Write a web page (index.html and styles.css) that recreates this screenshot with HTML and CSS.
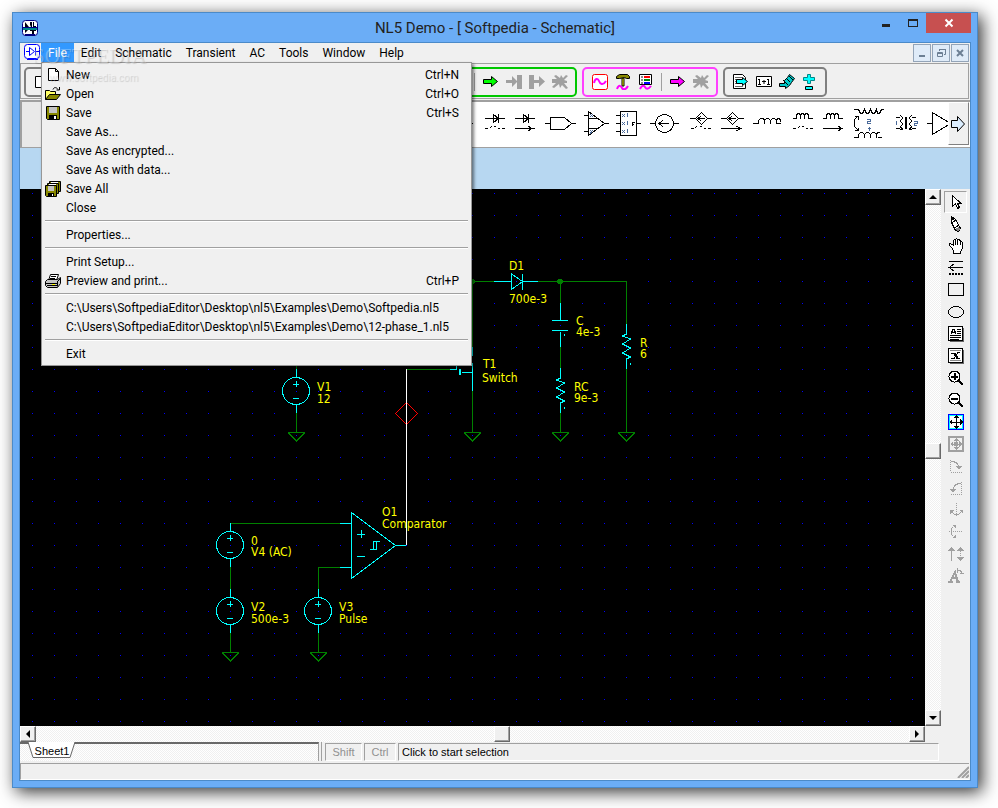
FILE: index.html
```html
<!DOCTYPE html>
<html lang="en">
<head>
  <meta charset="UTF-8" />
  <meta name="viewport" content="width=device-width, initial-scale=1" />
  <title>NL5 Demo - [ Softpedia - Schematic]</title>
  <link rel="stylesheet" href="styles.css">
</head>
<body>
  <div class="window">
    <header class="titlebar">
      <svg class="app-icon" width="16" height="16" viewBox="0 0 16 16">
        <rect x=".5" y=".5" width="15" height="15" rx="3" fill="#fff" stroke="#000080"/>
        <path d="M3 2l4 5H3zM8 2h2v5H9L8 5zM11 2h1v4h2v1h-3z" fill="#001"/>
        <path d="M1 7h14v1H1z" fill="#008"/>
        <path d="M1 8h14v2H1z" fill="#088"/>
        <path d="M3 10h3l-3 3zM8 10h6v1h-2v3h-2v-3H8z" fill="#001"/>
        <path d="M3 15h10" stroke="#000080" stroke-width="2"/>
      </svg>
      <h1>NL5 Demo - [ Softpedia - Schematic]</h1>
      <div class="window-buttons">
        <button aria-label="Minimize"><svg width="12" height="10" viewBox="0 0 12 10"><path d="M2 6h8v3H2z" fill="#222"/></svg></button>
        <button aria-label="Maximize"><svg width="12" height="10" viewBox="0 0 12 10"><path d="M1 1h10v8H1zM2 3v5h8V3z" fill="#222" fill-rule="evenodd"/></svg></button>
        <button class="close" aria-label="Close"><svg width="10" height="10" viewBox="0 0 10 10"><path d="M1.500 1.500l7 7M8.500 1.500l-7 7" stroke="#fff" stroke-width="2"/></svg></button>
      </div>
    </header>

    <div class="client">
      <nav class="menubar">
        <svg class="doc-icon" width="17" height="18" viewBox="0 0 17 18" fill="none" stroke="#00f">
          <rect x=".5" y="1.500" width="15" height="14" rx="3" fill="#fff"/>
          <path d="M2 8.500h3M12 8.500h3M5.500 4.500v8l5-4zM11.500 4.500v8M3 16.500h11"/>
        </svg>
        <div class="menu">
          <button class="active">File</button>
          <div class="dropdown">
            <button><svg viewBox="0 0 16 16"><path d="M3.500 1.500h7l3 3v9h-10zM10.500 1.500v3h3" fill="#fff" stroke="#000"/></svg><span>New</span><kbd>Ctrl+N</kbd></button>
            <button><svg viewBox="0 0 16 16"><path d="M.5 13.500v-9h4l1 1h5v3" fill="#ff6" stroke="#000"/><path d="M.5 13.500l4-5h11l-4 5z" fill="#880" stroke="#000"/><path d="M8 3.500c1-3 4-2 5 0M14.500 1v3h-3" fill="none" stroke="#000"/></svg><span>Open</span><kbd>Ctrl+O</kbd></button>
            <button><svg viewBox="0 0 16 16"><path d="M1.500 1.500h13v13h-12l-1-1z" fill="#880" stroke="#000"/><path d="M4 2h8v6H4z" fill="#c4c4c4"/><path d="M4 10h8v5H4z"/><path d="M9 11h2v3H9z" fill="#fff"/></svg><span>Save</span><kbd>Ctrl+S</kbd></button>
            <button><i></i><span>Save As...</span></button>
            <button><i></i><span>Save As encrypted...</span></button>
            <button><i></i><span>Save As with data...</span></button>
            <button><svg viewBox="0 0 16 16"><g fill="#880" stroke="#000"><path d="M4.500 .5h11v10h-11z"/><path d="M2.500 2.500h11v10h-11z"/><path d="M.5 4.500h11v11H1.500l-1-1z"/></g><path d="M3 5h6v5H3z" fill="#c4c4c4"/><path d="M6 1h7v1H6zM4 3h7v1H4z" fill="#fff"/><path d="M3 12h6v3H3z"/><path d="M7 13h1v2H7z" fill="#fff"/></svg><span>Save All</span></button>
            <button><i></i><span>Close</span></button>
            <hr>
            <button><i></i><span>Properties...</span></button>
            <hr>
            <button><i></i><span>Print Setup...</span></button>
            <button><svg viewBox="0 0 16 16"><path d="M3.500 7.500l2-6h8l-2 6" fill="#fff" stroke="#000"/><path d="M6 3.500h5M5 5.500h5" stroke="#000"/><path d="M.5 8.500l2-2h10l3-2v6l-3 4h-10l-2-2z" fill="#c4c4c4" stroke="#000"/><path d="M1 10.500h11M2 12.500h10M12.500 8.500v5M12 9l3-3" stroke="#000"/><path d="M7 11h3v1H7z" fill="#ff0"/></svg><span>Preview and print...</span><kbd>Ctrl+P</kbd></button>
            <hr>
            <button><i></i><span>C:\Users\SoftpediaEditor\Desktop\nl5\Examples\Demo\Softpedia.nl5</span></button>
            <button><i></i><span>C:\Users\SoftpediaEditor\Desktop\nl5\Examples\Demo\12-phase_1.nl5</span></button>
            <hr>
            <button><i></i><span>Exit</span></button>
          </div>
        </div>
        <button>Edit</button>
        <button>Schematic</button>
        <button>Transient</button>
        <button>AC</button>
        <button>Tools</button>
        <button>Window</button>
        <button>Help</button>
        <div class="mdi-buttons">
          <button aria-label="Minimize sheet"><svg width="12" height="12" viewBox="0 0 12 12"><path d="M3 8h6v2H3z" fill="#6c7f94"/></svg></button>
          <button aria-label="Restore sheet"><svg width="12" height="12" viewBox="0 0 12 12" fill="none" stroke="#6c7f94"><path d="M4.500 4V2.500h6v5H9M4 2.500h7M2.500 5.500h5v4h-5zM2 6.500h6"/></svg></button>
          <button aria-label="Close sheet"><svg width="12" height="12" viewBox="0 0 12 12"><path d="M3 3l6 6M9 3l-6 6" stroke="#6c7f94" stroke-width="2"/></svg></button>
        </div>
      </nav>

      <div class="toolbar">
        <div class="group group-file">
          <button aria-label="New"><svg viewBox="0 0 16 16"><path d="M1.500 2.500h9l3 3v8h-12z" fill="#fff" stroke="#000"/></svg></button>
        </div>
        <div class="group group-transient">
          <span class="divider"></span>
          <button aria-label="Run"><svg viewBox="0 0 16 16"><path d="M.5 5.500h8v-3l6 5-6 5v-3h-8z" fill="#0f0" stroke="#000"/></svg></button>
          <button aria-label="Step" disabled><svg viewBox="0 0 16 16"><path d="M0 6h6V2l5 5V1h5v14h-5V8l-5 5V9H0z" fill="#a0a0a0"/></svg></button>
          <button aria-label="Continue" disabled><svg viewBox="0 0 16 16"><path d="M0 1h5v5h5V2l6 5.500-6 5.500V9H5v6H0z" fill="#a0a0a0"/></svg></button>
          <button aria-label="Stop" disabled><svg viewBox="0 0 16 16"><path d="M0 5h5L2 2l2-1 4 3 1-3 2 3 3-3 2 1-4 4 3 1v2h-3l4 5-2 1-4-4-2 3-1-4-5 4-2-1 4-4H0z" fill="#a0a0a0"/></svg></button>
        </div>
        <div class="group group-ac">
          <button aria-label="Transient data"><svg viewBox="0 0 16 16"><rect x=".5" y=".5" width="15" height="15" rx="2" fill="#fff" stroke="#f00"/><path d="M2 9c1-5 4-5 5-2s4 5 7 0" fill="none" stroke="#f0f" stroke-width="2"/></svg></button>
          <button aria-label="AC settings"><svg viewBox="0 0 16 16"><path d="M7 4h2v8H7z" fill="#ff0" stroke="#000"/><path d="M1.500 2.500l3-2h8l2 2v2h-3l-2-1-5 1h-3z" fill="#880" stroke="#000"/><path d="M2 15c2-5 4-3 5-1s4 2 6-2" fill="none" stroke="#f0f" stroke-width="2"/></svg></button>
          <button aria-label="AC data"><svg viewBox="0 0 16 16"><path d="M1.500 .5h12v10h-12z" fill="#fff" stroke="#000"/><path d="M3 3h2M3 6h2M3 9h2" stroke="#888" stroke-width="2"/><path d="M6 3h6" stroke="#f00" stroke-width="2"/><path d="M6 6h6" stroke="#080" stroke-width="2"/><path d="M6 9h6" stroke="#00f" stroke-width="2"/><path d="M2 15c2-4 4-4 5-2s3 3 6-1" fill="none" stroke="#f0f" stroke-width="2"/></svg></button>
          <span class="divider"></span>
          <button aria-label="Run AC"><svg viewBox="0 0 16 16"><path d="M.5 5.500h8v-3l6 5-6 5v-3h-8z" fill="#f0f" stroke="#000"/></svg></button>
          <button aria-label="Stop AC" disabled><svg viewBox="0 0 16 16"><path d="M0 5h5L2 2l2-1 4 3 1-3 2 3 3-3 2 1-4 4 3 1v2h-3l4 5-2 1-4-4-2 3-1-4-5 4-2-1 4-4H0z" fill="#a0a0a0"/></svg></button>
        </div>
        <div class="group group-tools">
          <button aria-label="Script"><svg viewBox="0 0 16 16"><path d="M.5 .5h9l3 3v11H.5z" fill="#fff" stroke="#000"/><path d="M2 3.500h7M2 5.500h2M2 7.500h2M2 9.500h2M2 12.500h8" stroke="#666"/><path d="M3.500 5.500h6v-2l5 4-5 4v-2h-6z" fill="#0ff" stroke="#000"/></svg></button>
          <button aria-label="Calculator"><svg viewBox="0 0 16 16"><path d="M.5 2.500h15v10H.5z" fill="#fff" stroke="#000"/><path d="M3.500 5v5M2 10.500h3M2 5.500h2M12.500 5v5M11 10.500h3M11 5.500h2M6 7.500h4M8 6v4" stroke="#000"/></svg></button>
          <button aria-label="Sweep"><svg viewBox="0 0 16 16"><path d="M.5 9.500h5v-3l3-3 2-3 5 4-3 4-2 3-4 3v-2h-6z" fill="#0cc" stroke="#000"/><path d="M4 6l5 5M7 4l4 4M10 2l4 4" stroke="#000"/></svg></button>
          <button aria-label="Optimize"><svg viewBox="0 0 16 16"><path d="M5.500 .5h3v3h4v3h-4v3h-3v-3h-4v-3h4z" fill="#0ff" stroke="#088"/><path d="M3.500 12.500h7v3h-7z" fill="#0ff" stroke="#000"/></svg></button>
        </div>
      </div>

      <div class="palette">
        <button class="palette-prev" aria-label="Previous components"></button>
        <div class="parts">
          <button class="wide" aria-label="Resistor"><svg width="40" height="40" viewBox="0 0 40 40"><path d="M4 21.500h6l2-4 4 8 4-8 4 8 2-4h7"/></svg></button>
          <button aria-label="Diode, voltage controlled"><svg width="30" height="40" viewBox="0 0 30 40"><path d="M5 16.500h20M13.500 12.500v8l5-4zM18.500 12v9M5 26.500h3M10 26l2-2M14 24h2M18 26l2 0M22 26.500h3"/></svg></button>
          <button aria-label="Diode, current controlled"><svg width="30" height="40" viewBox="0 0 30 40"><path d="M5 16.500h20M13.500 12.500v8l5-4zM18.500 12v9M5 26.500h20M18 24l4 2.500-4 2.500"/></svg></button>
          <button class="wide" aria-label="Logic gate"><svg width="40" height="40" viewBox="0 0 40 40"><path d="M5 21.500h5M10.500 15.500h14l7 6-7 6h-14zM31 21.500h5"/></svg></button>
          <button aria-label="Multiplier"><svg width="30" height="40" viewBox="0 0 30 40"><path d="M4 13.500h4M4 29.500h4M8.500 9.500v24l16-12zM8 16.500h9M8 26.500h9M24 21.500h5"/><path class="mark" d="M10 12l3 3M13 12l-3 3M10 28l2 2M13 28l-3 4"/></svg></button>
          <button class="mid" aria-label="Function"><svg width="36" height="40" viewBox="0 0 36 40"><path d="M10.500 9.500h16v24h-16zM6 13.500h4M6 21.500h4M6 29.500h4M27 21.500h4M22.500 24v-4h2M22 22h2"/><path class="mark" d="M12 12l3 3M15 12l-3 3M17 11v4M12 20l3 3M15 20l-3 3M17 19v4M12 28l3 3M15 28l-3 3M17 27v4"/></svg></button>
          <button class="mid" aria-label="Current source"><svg width="36" height="40" viewBox="0 0 36 40"><circle cx="18.500" cy="21.500" r="9"/><path d="M4 21.500h5M28 21.500h5M13 21.500h10M17 18l-4 3.500 4 3.500"/></svg></button>
          <button class="mid" aria-label="Current source, voltage controlled"><svg width="36" height="40" viewBox="0 0 36 40"><path d="M8 16.500h5M25 16.500h5M19.500 10.500l-6 6 6 6 6-6zM16 16.500h7M19 14l-3 2.500 3 2.500M9 26.500h3M13 26l2-2M18 24h2M22 26l2 0M26 26.500h3"/></svg></button>
          <button aria-label="Current source, current controlled"><svg width="30" height="40" viewBox="0 0 30 40"><path d="M3 16.500h5M20 16.500h6M14.500 10.500l-6 6 6 6 6-6zM11 16.500h7M14 14l-3 2.500 3 2.500M3 26.500h20M18 24l5 2.500-5 2.500"/></svg></button>
          <button class="wide" aria-label="Inductor"><svg width="40" height="40" viewBox="0 0 40 40"><path d="M5 21.500h5.500v-2q0-3 3-3t3 3v2v-2q0-3 3-3t3 3v2v-2q0-3 3-3t3 3v2v-2q0-3 2-3t2 3M29 21.500h4"/></svg></button>
          <button aria-label="Inductor, voltage controlled"><svg width="30" height="40" viewBox="0 0 30 40"><path d="M5 16.500h3.500v-2q0-3 2-3t2 3v2v-2q0-3 2-3t2 3v2v-2q0-3 2-3t2 3v2h4M5 26.500h3M10 26l2-2M14 24h2M18 26l2 0M22 26.500h3"/></svg></button>
          <button aria-label="Inductor, current controlled"><svg width="30" height="40" viewBox="0 0 30 40"><path d="M5 16.500h3.500v-2q0-3 2-3t2 3v2v-2q0-3 2-3t2 3v2v-2q0-3 2-3t2 3v2h4M5 26.500h20M20 24l4 2.500-4 2.500"/></svg></button>
          <button class="wide" aria-label="Coupled inductors"><svg width="40" height="40" viewBox="0 0 40 40"><path d="M6 7.500h4.500l2 4h2l2-4l2 4h2l2-4l2 4h2l2-4l1 4h2l2-4h2M6 35.500h4.500v-3l2-2h2l2 2v3v-3l2-2h2l2 2v3v-3l2-2h2l2 2v3v-3l1-2h2M30 35.500h4M10 14l-4 4v6l4 4M7 14.500h3v3M7 28.500h3v-3"/><path class="mark" d="M19 17h3v2h-3v2h4M20 26h3M21 25v4"/></svg></button>
          <button class="mid" aria-label="Transformer"><svg width="36" height="40" viewBox="0 0 36 40"><path d="M8 15.500h4M12 13l3 3-3 3 3 3-3 3 3 2-3 1M8 26.500h4M28 15.500h-4M24 13l-3 3 3 3-3 3 3 3-3 2 3 1M28 26.500h-4M17.500 15v12M18.500 15v12"/><path class="mark" d="M8.500 19v4M26 19h3v2h-3v2h3"/></svg></button>
          <button class="cut" aria-label="Amplifier"><svg width="24" height="40" viewBox="0 0 24 40"><path d="M3 21.500h5M8.500 10.500v22l18-11z"/></svg></button>
        </div>
        <button class="palette-next" aria-label="More components"><svg width="15" height="18" viewBox="0 0 15 18"><path d="M.5 5.500h6v-4l7 7.500-7 7.500v-4h-6z" fill="#dceeff" stroke="#000"/></svg></button>
      </div>

      <div class="caption-strip"></div>

      <main class="workspace">
        <div class="sheet">
          <svg class="canvas" width="100%" height="100%">
            <defs>
              <pattern id="grid" width="22" height="22" patternUnits="userSpaceOnUse">
                <rect x="12" y="4" width="1" height="1" fill="#00f"/>
              </pattern>
              <g id="source" class="part">
                <circle cx="0" cy="0" r="13.500"/>
                <path d="M.5-22v8M.5 14v8M-3-6.500h6M.5-10v6M-3 7.500h6"/>
              </g>
              <path id="ground" class="wire" d="M-8 .5h17M-8 .5l8.500 8.500 8.500-8.500"/>
              <path id="zigzag" class="part" d="M.5-11v10L-3.500 1l8 3-8 5 8 4-8 5 8 4-4 2v10"/>
            </defs>
            <rect width="100%" height="100%" fill="url(#grid)"/>
            <g transform="translate(-20 -189)">
              <path class="wire" d="M296.500 340v29M296.500 413v19M230.500 523.500h110M230.500 567v22M230.500 633v19M340 567.500h-21.500v22M318.500 633v19"/>
              <path class="wire" d="M406 369.500h44M472.500 281v66M472.500 391v41M472 281.500h22M538 281.500h88.500V325M560.500 281v22M560.500 347v22M560.500 413v19M626.500 369v63"/>
              <circle class="node" cx="560" cy="281.500" r="3"/>
              <circle class="node" cx="472" cy="281.500" r="3"/>
              <use href="#ground" x="296" y="432"/>
              <use href="#ground" x="472" y="432"/>
              <use href="#ground" x="560" y="432"/>
              <use href="#ground" x="626" y="432"/>
              <use href="#ground" x="230" y="652"/>
              <use href="#ground" x="318" y="652"/>
              <use href="#source" x="296" y="391"/>
              <use href="#source" x="230" y="545"/>
              <use href="#source" x="230" y="611"/>
              <use href="#source" x="318" y="611"/>
              <use href="#zigzag" x="626" y="335"/>
              <use href="#zigzag" x="560" y="379"/>
              <!-- comparator -->
              <path class="part" d="M340 523.500h11M340 567.500h11M351.500 512.500v66l44-33zM395 545.500h11M357 534.500h8M361.500 530v8M357 556.500h8M370 549.500h6.500v-8M373.500 549v-7.500h6"/>
              <!-- switch -->
              <path class="part" d="M450 369.500h6.500V364M459.500 369v6M460.500 369v6M462 372.500h10M472.500 347v9M472.500 363v28"/>
              <!-- diode and capacitor -->
              <path class="part" d="M494 281.500h17M511.500 274v15.500l11-8zM522.500 274v16M522 281.500h16M560.500 303v17M552 320.500h16M552 330.500h16M560.500 332v15M564.500 334v2M564.500 407v2M630.500 363v2"/>
              <path class="probe" d="M406.500 402.500l11 11-11 11-11-11z"/>
              <g class="labels">
                <text x="317" y="391">V1</text><text x="317" y="403">12</text>
                <text x="382" y="516">O1</text><text x="382" y="528">Comparator</text>
                <text x="251" y="545">0</text><text x="251" y="556">V4 (AC)</text>
                <text x="251" y="611">V2</text><text x="251" y="623">500e-3</text>
                <text x="339" y="611">V3</text><text x="339" y="623">Pulse</text>
                <text x="509" y="270">D1</text><text x="509" y="303">700e-3</text>
                <text x="576" y="325">C</text><text x="576" y="336">4e-3</text>
                <text x="640" y="347">R</text><text x="640" y="358">6</text>
                <text x="574" y="391">RC</text><text x="574" y="402">9e-3</text>
                <text x="483" y="368">T1</text><text x="482" y="382">Switch</text>
              </g>
              <path class="selected" d="M406.500 369v176"/>
            </g>
          </svg>
          <div class="scroll scroll-v">
            <button aria-label="Scroll up"><svg width="8" height="8" viewBox="0 0 8 8"><path d="M0 6h8L4 2z"/></svg></button>
            <span class="track-before"></span>
            <span class="thumb"></span>
            <span class="track-after"></span>
            <button aria-label="Scroll down"><svg width="8" height="8" viewBox="0 0 8 8"><path d="M0 2h8L4 6z"/></svg></button>
          </div>
          <div class="scroll scroll-h">
            <button aria-label="Scroll left"><svg width="8" height="8" viewBox="0 0 8 8"><path d="M6 0v8L2 4z"/></svg></button>
            <span class="track-before"></span>
            <span class="thumb"></span>
            <span class="track-after"></span>
            <button aria-label="Scroll right"><svg width="8" height="8" viewBox="0 0 8 8"><path d="M2 0v8l4-4z"/></svg></button>
          </div>
          <div class="sheet-bar">
            <div class="tabs">
              <button class="tab"><svg width="48" height="17" viewBox="0 0 48 17"><path d="M0 0l5 15.500h37L47 0" fill="#fff" stroke="#666"/></svg><span>Sheet1</span></button>
            </div>
            <span class="splitter"></span>
            <span class="cell key">Shift</span>
            <span class="cell key key-ctrl">Ctrl</span>
            <span class="cell hint">Click to start selection</span>
          </div>
        </div>

        <div class="tools">
          <button class="pressed" aria-label="Select"><svg viewBox="0 0 16 16"><path d="M4.500 1.500v11l3-3 2 5 2-1-2-4h3.500z" fill="#fff" stroke="#000"/></svg></button>
          <button aria-label="Draw"><svg viewBox="0 0 16 16"><path d="M3.500 .5l4 3 5 9-2 3-3-1-4-8z" fill="#fff" stroke="#000"/><path d="M4 7l4-3M7 12l4-3" stroke="#000"/><path d="M8 12l3-1 1 2-2 2-2-1z" fill="#888"/><path d="M3 1h3v3H4z"/></svg></button>
          <button aria-label="Pan"><svg viewBox="0 0 16 16"><path d="M4.500 10.500l-3-3q-1-2 1-2l3 2v-5q1-2 2 0v-1q1-2 2 0v1q1-2 2.500 0v2q1-1.500 2.500 0v6l-2 3v2h-7v-2z" fill="#fff" stroke="#000"/><path d="M7.500 2v5M9.500 2v5M12 3v4" stroke="#000"/></svg></button>
          <button aria-label="Line"><svg viewBox="0 0 16 16"><path d="M1 1.500h14M1 7.500h14M6 4L1 7.500 6 11" stroke="#000" fill="none"/><path d="M1 14h15" stroke="#000" stroke-width="2" stroke-dasharray="2 1"/></svg></button>
          <button aria-label="Rectangle"><svg viewBox="0 0 16 16"><path d="M.5 1.500h15v12H.5z" fill="none" stroke="#000"/></svg></button>
          <button aria-label="Ellipse"><svg viewBox="0 0 16 16"><ellipse cx="8" cy="8" rx="7.500" ry="5.500" fill="none" stroke="#000"/></svg></button>
          <button aria-label="Text"><svg viewBox="0 0 16 16"><path d="M2 15.500h13.500V2" stroke="#666" fill="none"/><path d="M.5 .5h14v14H.5z" fill="#fff" stroke="#000"/><path d="M3 7.500l2-4h1l2 4M4 6.500h3M9 3.500h4M9 5.500h4M9 7.500h4M2 9.500h11M2 11.500h11M2 13.500h9" stroke="#000" fill="none"/></svg></button>
          <button aria-label="Variable"><svg viewBox="0 0 16 16"><path d="M2 15.500h13.500V2" stroke="#666" fill="none"/><path d="M.5 .5h14v14H.5z" fill="#fff" stroke="#000"/><path d="M2 2.500h11M2 12.500h11" stroke="#888"/><path d="M3 5.500h3M12 4.500h-2l-4 6H3M9 10.500h3" stroke="#000" fill="none"/><path d="M6 5l4 6" stroke="#000" stroke-width="2"/></svg></button>
          <button aria-label="Zoom in"><svg viewBox="0 0 16 16"><circle cx="6.500" cy="6.500" r="5.500" fill="#fff" stroke="#000"/><path d="M3 6.500h7M6.500 3v7M11 11l4 4" stroke="#000" stroke-width="2"/></svg></button>
          <button aria-label="Zoom out"><svg viewBox="0 0 16 16"><circle cx="6.500" cy="6.500" r="5.500" fill="#fff" stroke="#000"/><path d="M3 6.500h7M11 11l4 4" stroke="#000" stroke-width="2"/></svg></button>
          <button aria-label="Fit all"><svg viewBox="0 0 16 16"><path d="M.5 .5h15v15H.5z" fill="#fff" stroke="#00f"/><path d="M1.500 1.500h13v13h-13z" fill="none" stroke="#0ff"/><path d="M2 8h12M8 2v12" stroke="#000"/><path d="M8 1l3 3H5zM8 15l3-3H5zM1 8l3-3v6zM15 8l-3-3v6z"/></svg></button>
          <button aria-label="Fit selection" disabled><svg viewBox="0 0 16 16"><path d="M1 1h14v14H1z" fill="none" stroke="#a0a0a0" stroke-width="2"/><path d="M3 8h10M8 3v10" stroke="#a0a0a0"/><path d="M8 2l3 3H5zM8 14l3-3H5zM2 8l3-3v6zM14 8l-3-3v6zM6 6h4v4H6z" fill="#a0a0a0"/></svg></button>
          <button aria-label="Rotate right" disabled><svg viewBox="0 0 16 16" fill="none" stroke="#a0a0a0"><path d="M2.500 2v12h11" stroke-dasharray="1 1"/><path d="M3 3.500q8 0 8 7"/><path d="M8 8h6l-3 4z" fill="#a0a0a0" stroke="none"/></svg></button>
          <button aria-label="Rotate left" disabled><svg viewBox="0 0 16 16" fill="none" stroke="#a0a0a0"><path d="M13.500 2v12h-11" stroke-dasharray="1 1"/><path d="M13 3.500q-8 0-8 7"/><path d="M2 9h6l-3 4z" fill="#a0a0a0" stroke="none"/></svg></button>
          <button aria-label="Flip horizontal" disabled><svg viewBox="0 0 16 16" fill="none" stroke="#a0a0a0"><path d="M8.500 1v14" stroke-dasharray="1 1"/><path d="M4 10l2 2h5l2-2"/><path d="M2 8h4l-4 4zM11 8h4v4z" fill="#a0a0a0" stroke="none"/></svg></button>
          <button aria-label="Flip vertical" disabled><svg viewBox="0 0 16 16" fill="none" stroke="#a0a0a0"><path d="M1 7.500h14" stroke-dasharray="1 1"/><path d="M5 3l-2 2v5l2 2"/><path d="M4 1h4v4zM4 14h4v-4z" fill="#a0a0a0" stroke="none"/></svg></button>
          <button aria-label="Mirror" disabled><svg viewBox="0 0 16 16" fill="none" stroke="#a0a0a0"><path d="M3.500 2v13"/><path d="M12.500 3v10" stroke-dasharray="1 1"/><path d="M0 5h7L3.500 1zM9 5h7l-3.500-4zM9 11h7l-3.500 4z" fill="#a0a0a0" stroke="none"/></svg></button>
          <button aria-label="Text direction" disabled><svg viewBox="0 0 16 16" fill="none" stroke="#a0a0a0" stroke-width="2"><path d="M2 14L7 4l3 10M3 10h6M0 14h5M8 14h4"/><path d="M9 3q4-2 5 3M9 0v5M12 5h4" stroke-width="1"/></svg></button>
        </div>
      </main>

      <footer class="statusbar">
        <svg width="12" height="12" viewBox="0 0 12 12"><path d="M1 12L12 1M5 12l7-7M9 12l3-3" stroke="#a0a0a0" stroke-width="2"/></svg>
      </footer>
    </div>

    <div class="watermark">
      <strong>SOFTPEDIA</strong>
      <span>www.softpedia.com</span>
    </div>
  </div>
</body>
</html>
```
FILE: styles.css
```css
* {
  box-sizing: border-box;
}

body {
  margin: 0;
  height: 100vh;
  padding: 12px 20px 20px 12px;
  display: flex;
  background: #fff;
  color: #000;
  font-family: Roboto, "Open Sans", sans-serif;
  font-size: 12px;
  overflow: hidden;
}

button {
  padding: 0;
  border: none;
  background: none;
  color: inherit;
  font: inherit;
}

svg {
  display: block;
  flex: none;
}

.window {
  position: relative;
  flex: 1;
  min-width: 0;
  display: flex;
  flex-direction: column;
  padding: 0 6px 6px;
  background: #6badf6;
  border: 1px solid #4b8ac8;
  box-shadow: 4px 4px 16px rgba(0, 0, 0, 0.8);
}

/* title bar */
.titlebar {
  height: 29px;
  display: grid;
  grid-template-columns: 1fr auto 1fr;
  align-items: center;
}

.app-icon {
  margin-left: 3px;
}

.titlebar h1 {
  margin: 0;
  font-size: 15px;
  font-weight: normal;
  color: #222;
}

.window-buttons {
  align-self: start;
  justify-self: end;
  display: flex;
}

.window-buttons button {
  width: 27px;
  height: 20px;
  display: flex;
  align-items: center;
  justify-content: center;
}

.window-buttons .close {
  width: 45px;
  background: #c75050;
}

.client {
  flex: 1;
  min-height: 0;
  display: flex;
  flex-direction: column;
  background: #f0f0f0;
  border: 1px solid #4b8ac8;
}

/* menu */
.menubar {
  height: 20px;
  display: flex;
  align-items: flex-start;
  padding-left: 4px;
}

.menubar > button,
.menu > button {
  display: block;
  height: 19px;
  padding: 0 7px;
  line-height: 18px;
}

.menu {
  position: relative;
}

.menu > .active {
  background: #3399ff;
  color: #fff;
}

.dropdown {
  position: absolute;
  z-index: 5;
  top: 19px;
  left: 0;
  width: 431px;
  padding: 2px 3px;
  background: #f0f0f0;
  border: 1px solid #979797;
  box-shadow: 2px 2px 3px rgba(0, 0, 0, 0.5);
}

.dropdown button {
  width: 100%;
  height: 19px;
  display: flex;
  align-items: center;
  gap: 5px;
  padding-right: 9px;
  text-align: left;
  white-space: nowrap;
}

.dropdown svg,
.dropdown i {
  flex: none;
  width: 16px;
  height: 16px;
}

.dropdown kbd {
  margin-left: auto;
  font: inherit;
}

.dropdown hr {
  height: 2px;
  margin: 3px 0;
  border: none;
  border-top: 1px solid #a0a0a0;
  border-bottom: 1px solid #fff;
}

.mdi-buttons {
  margin: 1px 1px 0 auto;
  display: flex;
  gap: 1px;
}

.mdi-buttons button {
  width: 18px;
  height: 18px;
  display: flex;
  align-items: center;
  justify-content: center;
  background: #dfebf8;
  border: 1px solid #93a4b8;
}

/* toolbar */
.toolbar {
  height: 36px;
  display: flex;
  gap: 5px;
  padding: 3px;
  margin: 0 1px 1px 0;
  border: 1px solid #a0a0a0;
}

.group {
  height: 30px;
  display: flex;
  align-items: center;
  padding: 0 4px;
  border: 2px solid #808080;
  border-radius: 5px;
}

.group button {
  width: 23px;
  height: 24px;
  display: flex;
  align-items: center;
  justify-content: center;
}

.group svg {
  width: 16px;
  height: 16px;
}

.group-file {
  width: 389px;
}

.group-transient {
  width: 159px;
  justify-content: flex-end;
  border-color: #00c800;
}

.group-ac {
  border-color: #ff40ff;
}

.divider {
  width: 1px;
  height: 18px;
  margin: 0 4px;
  background: #a0a0a0;
}

/* component palette */
.palette {
  height: 48px;
  display: flex;
  padding-right: 1px;
  background: #fff;
  border-top: 2px solid #a0a0a0;
  border-bottom: 1px solid #a0a0a0;
}

.palette-prev {
  width: 24px;
  background: #e9e9e9;
  border-left: 2px solid #a0a0a0;
}

.parts {
  flex: 1;
  min-width: 0;
  display: flex;
  justify-content: flex-end;
  overflow: hidden;
}

.parts button {
  flex: none;
  width: 30px;
  height: 40px;
}

.parts .mid {
  width: 36px;
}

.parts .wide {
  width: 40px;
}

.parts .cut {
  width: 24px;
}

.parts svg {
  fill: none;
  stroke: #000;
  shape-rendering: crispEdges;
}

.parts .mark {
  stroke: #4a6a9a;
}

.palette-next {
  width: 21px;
  height: 43px;
  display: flex;
  align-items: center;
  justify-content: center;
  background: #f0f0f0;
  border: 1px solid #fff;
  border-right-color: #808080;
  border-bottom-color: #808080;
}

.caption-strip {
  height: 41px;
  background: #b7d7f1;
}

/* sheet area */
.workspace {
  flex: 1;
  min-height: 0;
  display: flex;
}

.sheet {
  flex: 1;
  min-width: 0;
  display: grid;
  grid-template-columns: minmax(0, 1fr) 16px;
  grid-template-rows: minmax(0, 1fr) 16px 20px;
}

.canvas {
  background: #000;
  fill: none;
  shape-rendering: crispEdges;
}

.wire {
  stroke: #008000;
}

.node {
  fill: #008000;
}

.part {
  stroke: #00ffff;
}

.probe {
  stroke: #ff0000;
}

.selected {
  stroke: #fff;
}

.labels {
  fill: #ffff00;
  font-family: "DejaVu Sans Condensed", "DejaVu Sans", sans-serif;
  font-size: 12px;
}

.scroll {
  display: flex;
  background: repeating-conic-gradient(#fff 0 25%, #f0f0f0 0 50%) 0 0 / 2px 2px;
}

.scroll-v {
  flex-direction: column;
}

.scroll button,
.thumb {
  flex: none;
  width: 16px;
  height: 16px;
  display: flex;
  align-items: center;
  justify-content: center;
  background: #f0f0f0;
  border: 1px solid #fff;
  border-right-color: #696969;
  border-bottom-color: #696969;
  box-shadow: inset -1px -1px #a0a0a0;
}

.track-before {
  flex: 237;
}

.track-after {
  flex: 249;
}

.scroll-h .track-before {
  flex: 456;
}

.scroll-h .track-after {
  flex: 398;
}

.sheet-bar {
  grid-column: 1 / -1;
  display: flex;
  gap: 2px;
  padding-right: 2px;
  font-family: "Liberation Sans", Arial, sans-serif;
  font-size: 11px;
}

.tabs {
  width: 299px;
  height: 19px;
  padding-left: 8px;
  border-top: 2px solid #696969;
  border-right: 1px solid #a0a0a0;
  background: repeating-conic-gradient(#fff 0 25%, #f0f0f0 0 50%) 0 0 / 2px 2px;
}

.tab {
  display: grid;
  align-items: center;
  justify-items: center;
  margin-top: -2px;
}

.tab svg,
.tab span {
  grid-area: 1 / 1;
}

.splitter {
  width: 2px;
  height: 19px;
  border-left: 1px solid #a0a0a0;
}

.cell {
  height: 18px;
  margin-top: 1px;
  line-height: 16px;
  border: 1px solid #a0a0a0;
  border-right-color: #fff;
  border-bottom-color: #fff;
}

.key {
  width: 37px;
  text-align: center;
  color: #909090;
}

.key-ctrl {
  width: 32px;
}

.hint {
  flex: 1;
  padding-left: 3px;
}

/* drawing tools */
.tools {
  width: 29px;
  display: flex;
  flex-direction: column;
  align-items: center;
  padding-top: 2px;
}

.tools button {
  width: 23px;
  height: 22px;
  display: flex;
  align-items: center;
  justify-content: center;
}

.tools svg {
  width: 16px;
  height: 16px;
  shape-rendering: crispEdges;
}

.tools .pressed {
  border: 1px solid #a0a0a0;
  border-right-color: #fff;
  border-bottom-color: #fff;
}

.statusbar {
  height: 17px;
  display: flex;
  justify-content: flex-end;
  align-items: flex-end;
  margin: 1px 1px 0 0;
  padding-bottom: 1px;
  border-top: 1px solid #a0a0a0;
  border-left: 1px solid #a0a0a0;
  border-bottom: 1px solid #fff;
}

/* faint site mark over the menu */
.watermark {
  position: absolute;
  z-index: 6;
  top: 31px;
  left: 20px;
  display: flex;
  flex-direction: column;
  gap: 4px;
  color: rgba(255, 255, 255, 0.3);
  text-shadow: 1px 1px 1px rgba(0, 0, 0, 0.15);
  pointer-events: none;
}

.watermark strong {
  font-family: "Liberation Serif", serif;
  font-size: 21px;
  font-weight: normal;
  line-height: 24px;
}

.watermark span {
  padding-left: 16px;
  font-size: 10px;
  line-height: 12px;
}
```
